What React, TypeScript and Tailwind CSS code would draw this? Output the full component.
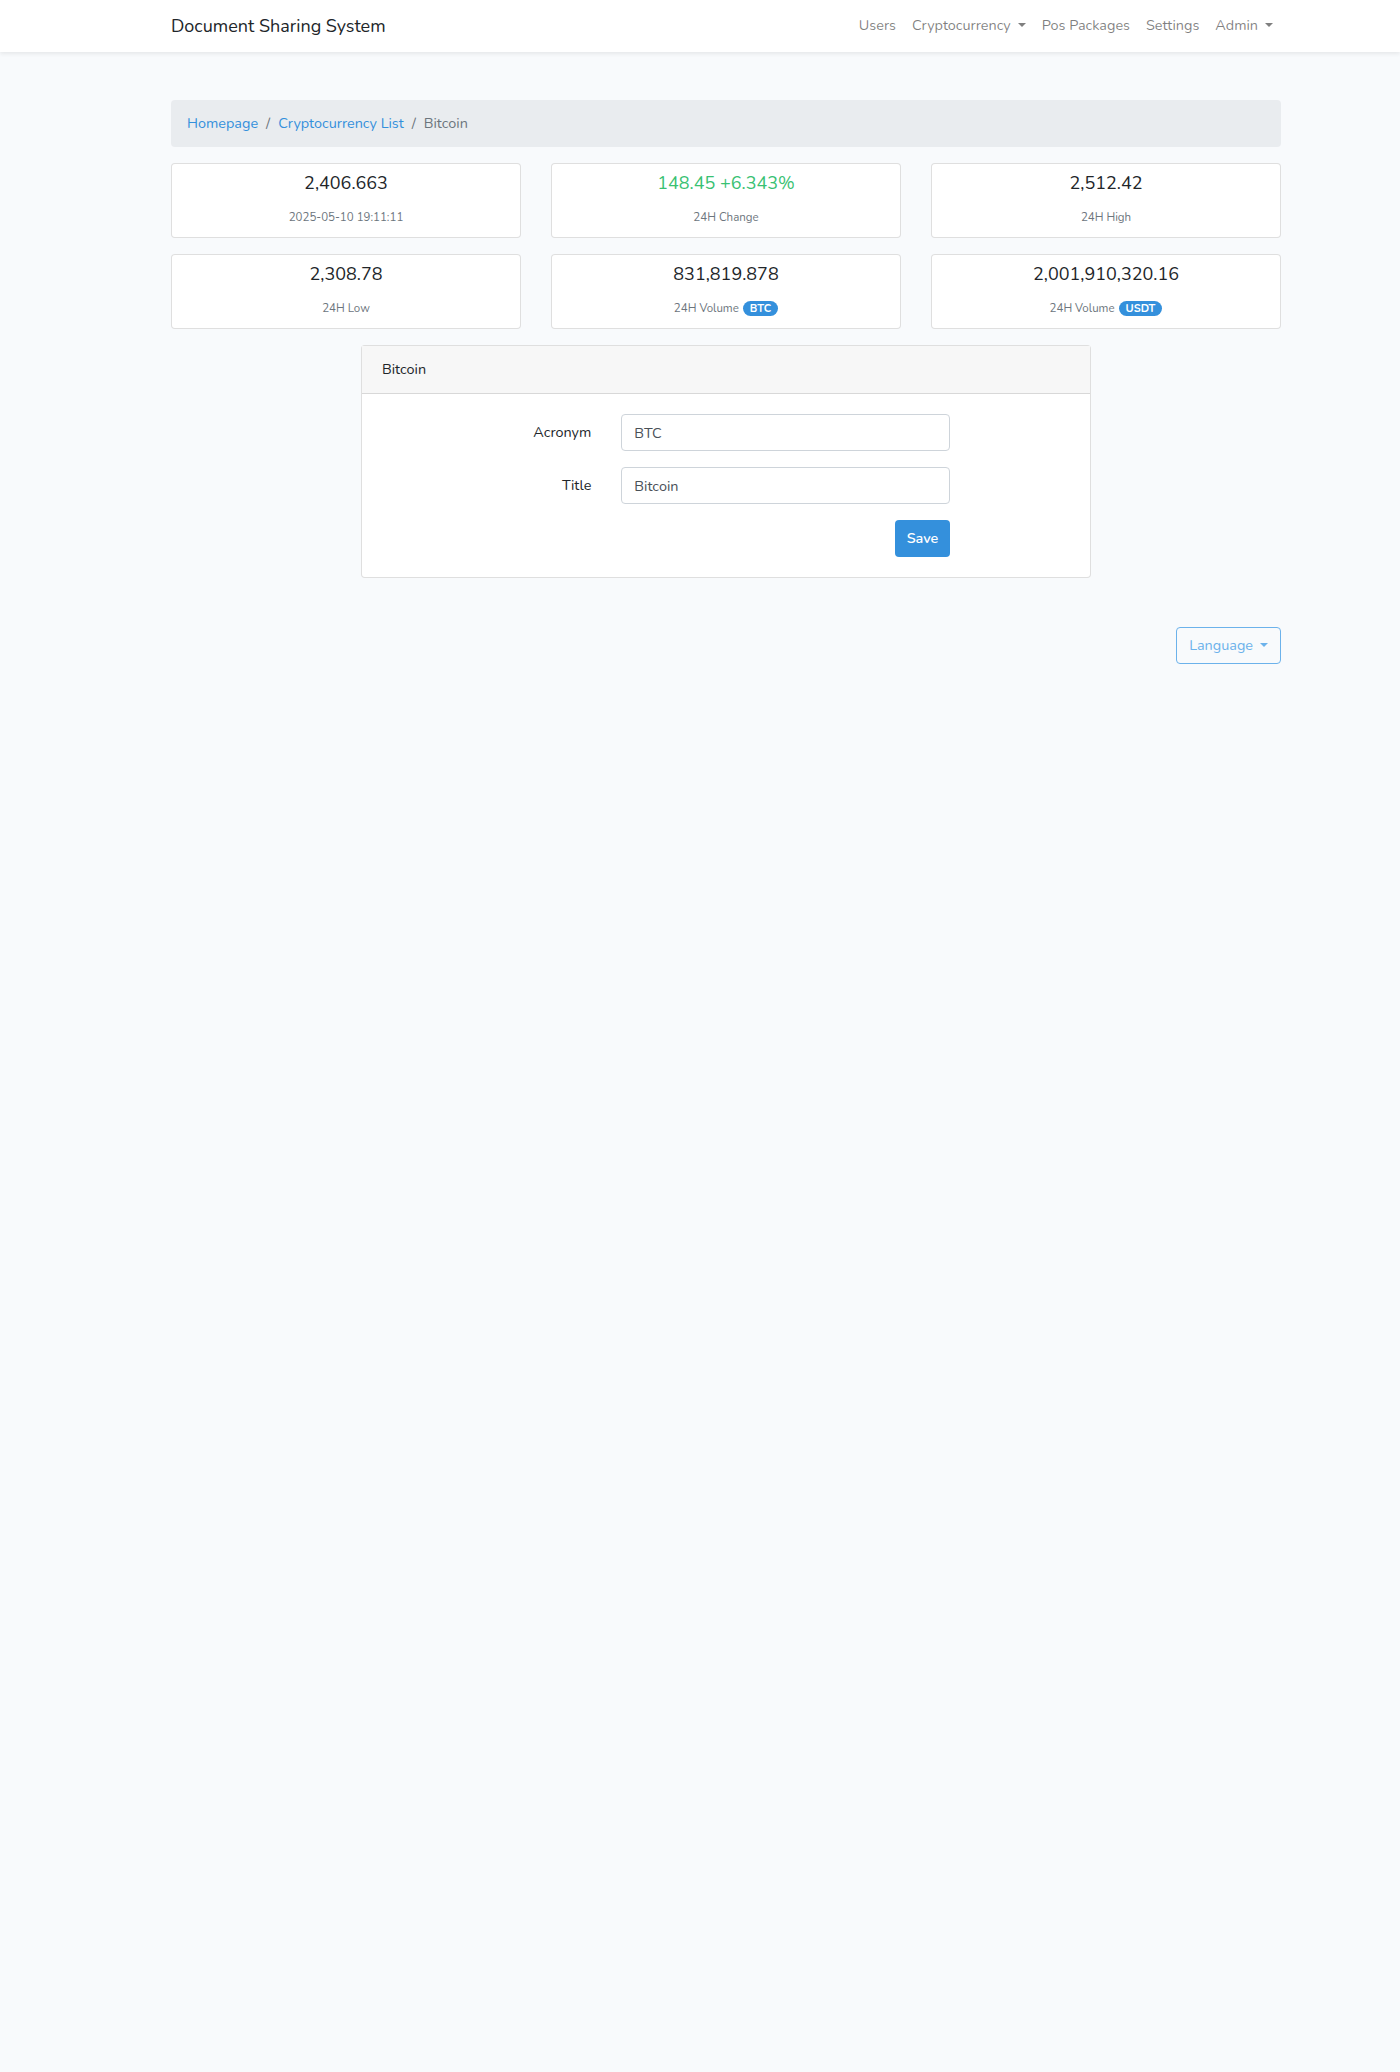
import React from 'react';

const stats = [
  { value: '2,406.663', label: '2025-05-10 19:11:11' },
  { value: '148.45 +6.343%', label: '24H Change', green: true },
  { value: '2,512.42', label: '24H High' },
  { value: '2,308.78', label: '24H Low' },
  { value: '831,819.878', label: '24H Volume', badge: 'BTC' },
  { value: '2,001,910,320.16', label: '24H Volume', badge: 'USDT' },
];

function Caret() {
  return (
    <span className="ml-[7px] inline-block align-[3px] border-x-[4.3px] border-t-[4.3px] border-x-transparent border-t-current" />
  );
}

export default function App() {
  return (
    <div className="min-h-[2072px] bg-[#f8fafc] font-['Nunito','Lato',sans-serif] text-[14.4px] leading-[1.6] text-[#212529]">
      <nav className="h-[52px] bg-white shadow-[0_2px_4px_rgba(0,0,0,0.075)]">
        <div className="ml-[156px] flex h-full w-[1140px] items-center justify-between px-[15px]">
          <a href="#" className="text-[18px] text-[#212529]">Document Sharing System</a>
          <ul className="flex items-center text-black/50">
            <li className="px-2">Users</li>
            <li className="px-2">Cryptocurrency<Caret /></li>
            <li className="px-2">Pos Packages</li>
            <li className="px-2">Settings</li>
            <li className="px-2">Admin<Caret /></li>
          </ul>
        </div>
      </nav>

      <main className="ml-[156px] w-[1140px] px-[15px] pt-[48px]">
        <ol className="flex items-center rounded bg-[#e9ecef] px-4 py-3 leading-[23px]">
          <li><a href="#" className="text-[#3490dc]">Homepage</a></li>
          <li className="px-2 text-[#6c757d]">/</li>
          <li><a href="#" className="text-[#3490dc]">Cryptocurrency List</a></li>
          <li className="px-2 text-[#6c757d]">/</li>
          <li className="text-[#6c757d]">Bitcoin</li>
        </ol>

        <div className="mt-4 grid grid-cols-3 gap-x-[30px] gap-y-4">
          {stats.map((s, i) => (
            <div key={i} className="rounded border border-black/[0.125] bg-white pt-[7px] pb-[11px] text-center">
              <div className={`text-[18px] leading-[24px] ${s.green ? 'text-[#38c172]' : 'text-[#212529]'}`}>{s.value}</div>
              <div className="mt-[14px] flex h-[17px] items-center justify-center text-[11.5px] leading-[17px] text-[#6c757d]">
                {s.label}
                {s.badge && (
                  <span className="ml-[4px] rounded-full bg-[#3490dc] px-[7px] text-[11px] leading-[15px] font-bold text-white">{s.badge}</span>
                )}
              </div>
            </div>
          ))}
        </div>

        <div className="mx-auto mt-4 w-[730px] rounded border border-black/[0.125] bg-white">
          <div className="border-b border-black/[0.125] bg-[#f7f7f7] px-5 py-3 leading-[23px]">Bitcoin</div>
          <div className="p-5">
            <div className="-mx-[15px] mb-4 flex">
              <label className="w-1/3 px-[15px] py-[7px] text-right leading-[23px]">Acronym</label>
              <div className="w-1/2 px-[15px]">
                <input defaultValue="BTC" className="h-[37px] w-full rounded border border-[#ced4da] bg-white px-3 text-[#495057] outline-none" />
              </div>
            </div>
            <div className="-mx-[15px] mb-4 flex">
              <label className="w-1/3 px-[15px] py-[7px] text-right leading-[23px]">Title</label>
              <div className="w-1/2 px-[15px]">
                <input defaultValue="Bitcoin" className="h-[37px] w-full rounded border border-[#ced4da] bg-white px-3 text-[#495057] outline-none" />
              </div>
            </div>
            <div className="-mx-[15px] flex">
              <div className="ml-[33.333333%] flex w-1/2 justify-end px-[15px]">
                <button className="h-[37px] rounded bg-[#3490dc] px-3 font-semibold text-white">Save</button>
              </div>
            </div>
          </div>
        </div>

        <div className="mt-[49px] flex justify-end">
          <button className="h-[37px] rounded border border-[#6cb2eb] px-3 text-[#6cb2eb]">
            Language<Caret />
          </button>
        </div>
      </main>
    </div>
  );
}
